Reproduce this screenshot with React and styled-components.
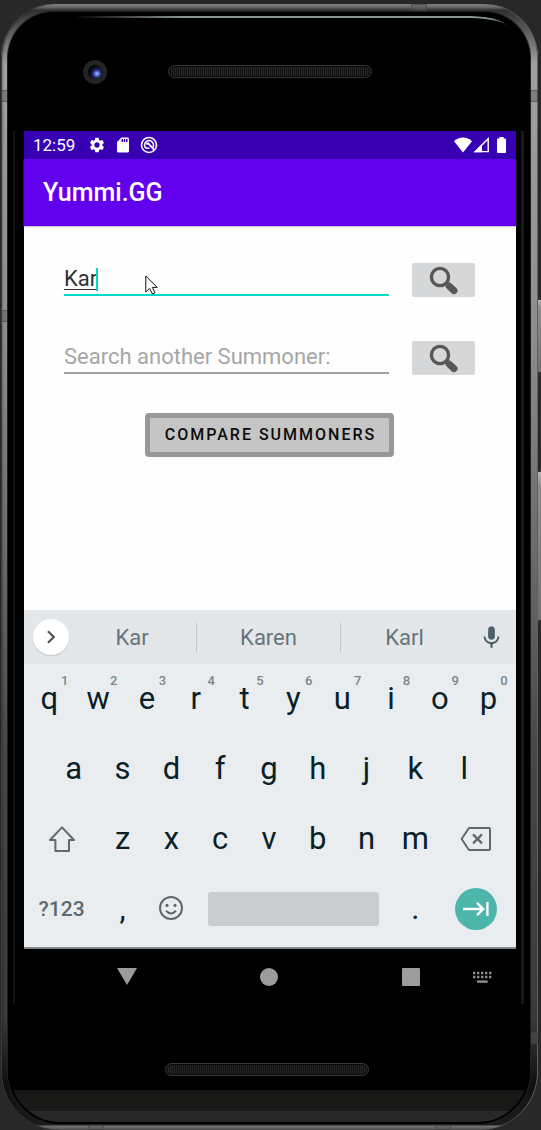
import React, { useState } from "react";
import styled, { createGlobalStyle, css } from "styled-components";
import { MdSettings, MdSdCard, MdMic } from "react-icons/md";

const GlobalStyle = createGlobalStyle`
  * { box-sizing: border-box; }
  body { margin: 0; background: #282828; font-family: Roboto, "Liberation Sans", sans-serif; }
  button, input { font: inherit; color: inherit; margin: 0; padding: 0; border: 0; background: none; outline: none; border-radius: 0; }
`;

/* ---------- device ---------- */

const Page = styled.div`
  min-height: 100vh;
  padding: 4px 3px 0 1px;
  display: flex;
  overflow: hidden;
`;

const Phone = styled.div`
  position: relative;
  flex: 1;
  min-width: 0;
  display: flex;
  padding: 8px 8px 6px 7px;
  border-radius: 54px 54px 58px 58px;
  background: linear-gradient(180deg, #8a8a8a 0, #5c5c5c 4px, #303030 6px, #a0a0a0 60px, #8c8c8c 30%, #686868 50%, #484848 66%, #3a3a3a 90%, #101010 96%, #1c1c1c calc(100% - 5px), #747474 calc(100% - 4px), #505050 100%);
  box-shadow: inset 1px 0 #3c3c3c, inset -1px 0 #606060, inset 2px 0 2px rgba(0, 0, 0, 0.25);
`;

const Body = styled.div`
  position: relative;
  flex: 1;
  min-width: 0;
  display: flex;
  flex-direction: column;
  border-radius: 46px 46px 52px 52px;
  box-shadow: 0 0 0 1px #202020, inset 0 0 0 2px #000;
  background: linear-gradient(180deg, #000 calc(100% - 34px), #181816 calc(100% - 34px), #181816 calc(100% - 13px), #282828 calc(100% - 13px), #282828 calc(100% - 2px), #0c0c0c calc(100% - 2px));

  &::after {
    content: "";
    position: absolute;
    top: 4px;
    left: 66px;
    right: 20px;
    height: 14px;
    border-top: 2px solid #8c9598;
    border-top-right-radius: 40px 14px;
    mask-image: linear-gradient(90deg, transparent 0, #000 25%, #000 96%, transparent 100%);
    pointer-events: none;
  }
`;

const bandSides = {
  left: css`left: 0; width: 7px; height: 12px;`,
  right: css`right: 0; width: 8px; height: 12px;`,
  top: css`top: 0; width: 16px; height: 7px;`,
  bottom: css`bottom: 0; width: 16px; height: 5px;`,
};

const AntennaBand = styled.span`
  position: absolute;
  ${(p) => bandSides[p.$side]}
  ${(p) => (p.$side === "left" || p.$side === "right" ? css`top: ${p.$at};` : css`left: ${p.$at};`)}
  background: rgba(90, 90, 90, 0.5);
  border: 1px solid rgba(50, 50, 50, 0.4);
`;

const HardwareKey = styled.span`
  position: absolute;
  left: 100%;
  width: 3px;
  top: ${(p) => p.$top};
  height: ${(p) => p.$length};
  border: solid #303030;
  border-width: 3px 0;
  background: linear-gradient(180deg, #b4b4b4, #8c8c8c 10%, #707070);
`;

const UpperBezel = styled.div`
  height: 119px;
  padding-left: 2px;
  display: grid;
  grid-template-columns: 1fr auto 1fr;
  align-items: center;
`;

const Camera = styled.span`
  width: 24px;
  height: 24px;
  margin-left: 73px;
  border-radius: 50%;
  border: 5px solid #242424;
  background: radial-gradient(circle at 64% 62%, #b4c4ff 0, #5868d0 18%, #1c2460 34%, #05060c 62%);
`;

const Speaker = styled.span`
  width: 204px;
  height: 13px;
  border-radius: 7px;
  border: 1px solid #383836;
  box-shadow: inset 0 0 0 1px #0a0a0a;
  background: repeating-linear-gradient(90deg, #262624 0 1px, #121212 1px 2px);
`;

const LowerBezel = styled.div`
  height: 120px;
  padding: 59px 4px 0 0;
  display: flex;
  justify-content: center;
`;

const Display = styled.div`
  flex: 1;
  margin: 0 6px 0 5px;
  padding: 0 8px 0 11px;
  display: flex;
  flex-direction: column;
  background: #000;
  box-shadow: inset 2px 0 #141412, inset -3px 0 #181816;
`;

/* ---------- app ---------- */

const StatusBar = styled.header`
  height: 28px;
  padding: 0 9px;
  display: flex;
  align-items: center;
  gap: 13px;
  background: #3700b3;
  color: #fff;
  font-size: 17px;
  line-height: 28px;

  svg { display: block; flex: none; }
`;

const StatusGroup = styled.div`
  display: flex;
  align-items: center;
  gap: ${(p) => p.$gap};
  ${(p) => p.$end && "margin-left: auto;"}
`;

const AppBar = styled.div`
  height: 67px;
  padding: 1px 19px 0;
  display: flex;
  align-items: center;
  background: #6200ee;
  box-shadow: 0 1px 1px #c8c4d4;
  position: relative;
`;

const Title = styled.h1`
  margin: 0;
  color: #fff;
  font-size: 25px;
  line-height: 28px;
  font-weight: 500;
`;

const Content = styled.main`
  flex: 1;
  min-height: 384px;
  padding: 33px 41px 0 40px;
  display: flex;
  flex-direction: column;
  gap: 38px;
  background: #fefefe;
`;

const SearchFields = styled.div`
  display: grid;
  gap: 40px;
`;

const SearchRow = styled.form`
  height: 38px;
  display: flex;
  align-items: flex-end;
  gap: 23px;
`;

const Field = styled.label`
  position: relative;
  flex: 1;
  min-width: 0;
  height: 37px;
  margin-bottom: 1px;
  display: flex;
  border-bottom: 2px solid ${(p) => (p.$active ? "#03dac5" : "#a0a0a0")};
`;

const TextInput = styled.input`
  width: 100%;
  min-width: 0;
  height: 35px;
  padding-top: 3px;
  font-size: 22px;
  line-height: 32px;
  color: #303030;
  caret-color: #03dac5;
  text-decoration: ${(p) => (p.$composing ? "underline 1px" : "none")};
  text-underline-offset: 3px;

  &::placeholder { color: #a6a6a6; opacity: 1; }
`;

const Caret = styled.span`
  position: absolute;
  left: 32px;
  top: 9px;
  width: 2px;
  height: 23px;
  background: #03dac5;
`;

const Pointer = styled.svg`
  position: absolute;
  left: 81px;
  top: 16px;
  width: 13px;
  height: 20px;
`;

const SearchButton = styled.button`
  width: 63px;
  height: 34px;
  display: grid;
  place-items: center;
  border-radius: 2px;
  background: #d6d7d8;
`;

const CompareButton = styled.button`
  align-self: center;
  height: 44px;
  padding: 0 13px 0 15px;
  border: 5px solid #989898;
  border-radius: 4px;
  background: #c5c5c5;
  color: #0c0c0c;
  font-size: 16px;
  line-height: 34px;
  font-weight: 500;
  letter-spacing: 2px;
  white-space: nowrap;
`;

/* ---------- keyboard ---------- */

const Suggestions = styled.div`
  height: 54px;
  padding: 0 9px;
  display: flex;
  align-items: center;
  background: #e3e7ea;
`;

const ExpandButton = styled.button`
  width: 36px;
  height: 36px;
  display: grid;
  place-items: center;
  border-radius: 50%;
  background: #fff;
  box-shadow: 0 1px 1px #c0c4c6;
`;

const SuggestionList = styled.div`
  flex: 1;
  display: grid;
  grid-template-columns: 8fr 9fr 8fr;
  margin: 0 7px 0 -1px;
`;

const Suggestion = styled.button`
  height: 29px;
  padding-top: 1px;
  color: #65757b;
  font-size: 22px;
  line-height: 28px;

  & + & { border-left: 1px solid #c2c6c8; }
`;

const MicButton = styled.button`
  width: 32px;
  height: 36px;
  display: grid;
  place-items: center;
  color: #4f5f67;
`;

const Keys = styled.div`
  padding: 0 3px 3px 1px;
  background: #e9edf0;
  border-bottom: 2px solid #84888a;
`;

const KeyRow = styled.div`
  height: 70px;
  display: flex;
  padding: 0 ${(p) => (p.$inset ? "5%" : "0")};
`;

const Key = styled.button`
  position: relative;
  flex: ${(p) => p.$span || 2} 1 0;
  min-width: 0;
  display: grid;
  place-items: center;
  color: ${(p) => (p.$muted ? "#5c6a70" : "#0a1f28")};
  font-size: ${(p) => (p.$muted ? "21px" : "31px")};
  font-weight: ${(p) => (p.$muted ? 500 : 400)};
  line-height: 36px;
`;

const Hint = styled.sup`
  position: absolute;
  top: 9px;
  right: 5px;
  width: 8px;
  text-align: center;
  color: #7b868a;
  font-size: 13px;
  line-height: 16px;
  font-weight: 500;
`;

const SpaceKey = styled(Key)`
  &::before {
    content: "";
    justify-self: stretch;
    height: 34px;
    margin: 0 12px;
    border-radius: 3px;
    background: #c9cdd0;
  }
`;

const EnterFace = styled.span`
  width: 42px;
  height: 42px;
  display: grid;
  place-items: center;
  border-radius: 50%;
  background: #4db6ac;
`;

const NavBar = styled.nav`
  position: relative;
  height: 55px;
  padding: 0 34px 0 32px;
  display: flex;
  align-items: center;
`;

const NavButton = styled.button`
  flex: 1;
  height: 40px;
  display: grid;
  place-items: center;
`;

const KeyboardSwitch = styled.button`
  position: absolute;
  right: 24px;
  top: 20px;
  width: 20px;
  height: 16px;

  svg { display: block; }
`;

const SearchGlyph = () => (
  <svg width="30" height="30" viewBox="0 0 30 30" aria-hidden="true">
    <circle cx="11" cy="12" r="8.6" fill="none" stroke="#575757" strokeWidth="3.4" />
    <path d="M16.5 17.5 L20 21" stroke="#575757" strokeWidth="4" />
    <path d="M20 21 L25 25.6" stroke="#575757" strokeWidth="7" strokeLinecap="round" />
  </svg>
);

function SearchField({ label, value, onChange, active, placeholder }) {
  return (
    <SearchRow onSubmit={(e) => e.preventDefault()}>
      <Field $active={active}>
        <TextInput
          aria-label={label}
          value={value}
          placeholder={placeholder}
          onChange={(e) => onChange(e.target.value)}
          $composing={active}
          spellCheck={false}
        />
        {active && <Caret />}
        {active && (
          <Pointer viewBox="0 0 13 20" aria-hidden="true">
            <path d="M.8 1 V17 L4.6 13.4 L7.4 19 L10 17.8 L7.4 12.4 H12.2 Z" fill="#fff" stroke="#111" strokeWidth="1" />
          </Pointer>
        )}
      </Field>
      <SearchButton type="submit" aria-label={`${label}: search`}>
        <SearchGlyph />
      </SearchButton>
    </SearchRow>
  );
}

export default function App() {
  const [first, setFirst] = useState("Kar");
  const [second, setSecond] = useState("");

  return (
    <>
      <GlobalStyle />
      <Page>
        <Phone>
          <AntennaBand $side="top" $at="410px" />
          <AntennaBand $side="left" $at="86px" />
          <AntennaBand $side="right" $at="86px" />
          <AntennaBand $side="left" $at="306px" />
          <AntennaBand $side="right" $at="1028px" />
          <AntennaBand $side="bottom" $at="87px" />
          <AntennaBand $side="bottom" $at="434px" />
          <HardwareKey $top="293px" $length="78px" />
          <HardwareKey $top="465px" $length="154px" />
          <Body>
            <UpperBezel>
              <Camera />
              <Speaker />
            </UpperBezel>

            <Display>
              <StatusBar>
                <span>12:59</span>
                <StatusGroup $gap="8px">
                  <MdSettings size={18} />
                  <MdSdCard size={18} />
                  <svg width="18" height="18" viewBox="0 0 18 18" fill="none" stroke="#fff">
                    <circle cx="9" cy="9" r="7.5" strokeWidth="1.6" />
                    <path d="M6 12.2 A4.4 4.4 0 1 1 12.3 12" strokeWidth="1.7" />
                    <path d="M6.2 8.2 L8 7.2 L14 13.6" strokeWidth="1.8" />
                    <path d="M6 12.2 H9.4" strokeWidth="1.5" />
                  </svg>
                </StatusGroup>
                <StatusGroup $gap="1px" $end>
                  <svg width="18" height="16" viewBox="0 0 18 16" fill="#fff">
                    <path d="M0 4.2 C5 -.6 13 -.6 18 4.2 L9 15.4 Z" />
                  </svg>
                  <svg width="17" height="16" viewBox="0 0 17 16">
                    <path d="M2.4 14.6 L15.2 1.8 V14.6 Z" fill="none" stroke="#fff" strokeWidth="1.4" />
                    <path d="M1 15.2 L9 7.2 V15.2 Z" fill="#fff" />
                  </svg>
                  <svg width="16" height="16" viewBox="0 0 16 16" fill="#fff">
                    <path d="M8.4 0 H12.6 V1.6 H14 Q15 1.6 15 2.6 V15 Q15 16 14 16 H7 Q6 16 6 15 V2.6 Q6 1.6 7 1.6 H8.4 Z" />
                  </svg>
                </StatusGroup>
              </StatusBar>

              <AppBar>
                <Title>Yummi.GG</Title>
              </AppBar>

              <Content>
                <SearchFields>
                  <SearchField label="Summoner" value={first} onChange={setFirst} active />
                  <SearchField
                    label="Other summoner"
                    value={second}
                    onChange={setSecond}
                    placeholder="Search another Summoner:"
                  />
                </SearchFields>
                <CompareButton type="button">COMPARE SUMMONERS</CompareButton>
              </Content>

              <Suggestions>
                <ExpandButton type="button" aria-label="Expand">
                  <svg width="14" height="16" viewBox="0 0 14 16">
                    <path d="M4 2.2 L9.8 8 L4 13.8" fill="none" stroke="#555" strokeWidth="2.2" />
                  </svg>
                </ExpandButton>
                <SuggestionList>
                  {["Kar", "Karen", "Karl"].map((word) => (
                    <Suggestion key={word} type="button">{word}</Suggestion>
                  ))}
                </SuggestionList>
                <MicButton type="button" aria-label="Voice input">
                  <MdMic size={27} />
                </MicButton>
              </Suggestions>

              <Keys>
                <KeyRow>
                  {[..."qwertyuiop"].map((letter, i) => (
                    <Key key={letter} type="button">
                      {letter}
                      <Hint>{(i + 1) % 10}</Hint>
                    </Key>
                  ))}
                </KeyRow>
                <KeyRow $inset>
                  {[..."asdfghjkl"].map((letter) => (
                    <Key key={letter} type="button">{letter}</Key>
                  ))}
                </KeyRow>
                <KeyRow>
                  <Key type="button" $span={3} aria-label="Shift">
                    <svg width="28" height="28" viewBox="0 0 28 28" fill="none" stroke="#5c6a70" strokeWidth="2" strokeLinejoin="round">
                      <path d="M14 2.4 L26 15 H21 V26 H7.4 V15 H2 Z" />
                    </svg>
                  </Key>
                  {[..."zxcvbnm"].map((letter) => (
                    <Key key={letter} type="button">{letter}</Key>
                  ))}
                  <Key type="button" $span={3} aria-label="Backspace">
                    <svg width="32" height="26" viewBox="0 0 32 26" fill="none" stroke="#5c6a70" strokeWidth="2" strokeLinejoin="round">
                      <path d="M9 2 H29 Q30 2 30 3 V23 Q30 24 29 24 H9 L1.6 13 Z" />
                      <path d="M13 8.4 L22 17.4 M22 8.4 L13 17.4" strokeWidth="2.2" />
                    </svg>
                  </Key>
                </KeyRow>
                <KeyRow>
                  <Key type="button" $span={3} $muted>?123</Key>
                  <Key type="button">,</Key>
                  <Key type="button" aria-label="Emoji">
                    <svg width="26" height="26" viewBox="0 0 26 26" fill="none" stroke="#5c6a70" strokeWidth="2">
                      <circle cx="13" cy="12" r="11" />
                      <path d="M8 14.8 Q13 20 18 14.8" />
                      <circle cx="9" cy="9.4" r="1.6" fill="#5c6a70" stroke="none" />
                      <circle cx="17" cy="9.4" r="1.6" fill="#5c6a70" stroke="none" />
                    </svg>
                  </Key>
                  <SpaceKey type="button" $span={8} aria-label="Space" />
                  <Key type="button">.</Key>
                  <Key type="button" $span={3} aria-label="Next">
                    <EnterFace>
                      <svg width="26" height="16" viewBox="0 0 26 16" fill="none" stroke="#fff" strokeWidth="2.4">
                        <path d="M0 8 H20 M14 1.8 L20.2 8 L14 14.2 M24.4 1 V15" />
                      </svg>
                    </EnterFace>
                  </Key>
                </KeyRow>
              </Keys>

              <NavBar>
                <NavButton type="button" aria-label="Back">
                  <svg width="20" height="18" viewBox="0 0 20 18"><path d="M0 0 H20 L10 17 Z" fill="#9c9c9c" /></svg>
                </NavButton>
                <NavButton type="button" aria-label="Home">
                  <svg width="18" height="18" viewBox="0 0 18 18"><circle cx="9" cy="9" r="9" fill="#9c9c9c" /></svg>
                </NavButton>
                <NavButton type="button" aria-label="Recent apps">
                  <svg width="18" height="18" viewBox="0 0 18 18"><rect width="18" height="18" rx="1" fill="#9c9c9c" /></svg>
                </NavButton>
                <KeyboardSwitch type="button" aria-label="Switch keyboard">
                  <svg width="20" height="16" viewBox="0 0 20 16" fill="none" stroke="#8c8c8c">
                    <path d="M1 4 H20 M1 8 H20" strokeWidth="2.4" strokeDasharray="2.4 1.6" />
                    <path d="M5 12.6 H15.6" strokeWidth="2.4" />
                  </svg>
                </KeyboardSwitch>
              </NavBar>
            </Display>

            <LowerBezel>
              <Speaker />
            </LowerBezel>
          </Body>
        </Phone>
      </Page>
    </>
  );
}
